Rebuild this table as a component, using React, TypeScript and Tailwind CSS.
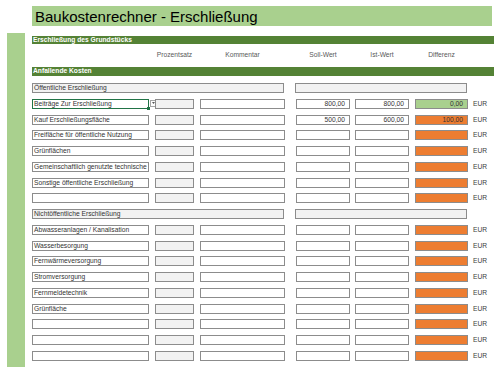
type Row =
  | { kind: 'group'; label: string }
  | { kind: 'item'; label: string; selected?: boolean; soll?: string; ist?: string; diff?: string; ok?: boolean };

const ROWS: Row[] = [
  { kind: 'group', label: 'Öffentliche Erschließung' },
  { kind: 'item', label: 'Beiträge Zur Erschließung', selected: true, soll: '800,00', ist: '800,00', diff: '0,00', ok: true },
  { kind: 'item', label: 'Kauf Erschließungsfläche', soll: '500,00', ist: '600,00', diff: '100,00' },
  { kind: 'item', label: 'Freifläche für öffentliche Nutzung' },
  { kind: 'item', label: 'Grünflächen' },
  { kind: 'item', label: 'Gemeinschaftlich genutzte technische' },
  { kind: 'item', label: 'Sonstige öffentliche Erschließung' },
  { kind: 'item', label: '' },
  { kind: 'group', label: 'Nichtöffentliche Erschließung' },
  { kind: 'item', label: 'Abwasseranlagen / Kanalisation' },
  { kind: 'item', label: 'Wasserbesorgung' },
  { kind: 'item', label: 'Fernwärmeversorgung' },
  { kind: 'item', label: 'Stromversorgung' },
  { kind: 'item', label: 'Fernmeldetechnik' },
  { kind: 'item', label: 'Grünfläche' },
  { kind: 'item', label: '' },
  { kind: 'item', label: '' },
  { kind: 'item', label: '' },
];

const cell = 'h-[10px] shrink-0 border border-[#8c8c8c] overflow-hidden whitespace-nowrap leading-[8px]';

function ItemRow({ row }: { row: Extract<Row, { kind: 'item' }> }) {
  return (
    <div className="flex h-[15.76px] items-start">
      <div
        className={
          row.selected
            ? 'relative h-[10px] w-[117px] shrink-0 border border-[#217346] pl-[1px] leading-[8px] whitespace-nowrap'
            : `${cell} w-[117px] pl-[1px]`
        }
      >
        {row.label}
        {row.selected ? (
          <span className="absolute -bottom-[2px] -right-[2px] h-[3px] w-[3px] bg-[#217346]" />
        ) : null}
      </div>
      {row.selected ? (
        <div className="ml-[1px] mt-[1px] flex h-[7px] w-[7px] shrink-0 items-center justify-center border border-[#a6a6a6] bg-white">
          <svg width="3" height="2" viewBox="0 0 3 2">
            <path d="M0 0h3L1.5 2z" fill="#595959" />
          </svg>
        </div>
      ) : (
        <div className="w-[8px] shrink-0" />
      )}
      <div className={`${cell} ml-[-2px] w-[39px] bg-[#f2f2f2]`} />
      <div className={`${cell} ml-[6px] w-[85px]`} />
      <div className={`${cell} ml-[11px] w-[54px] pr-[4px] text-right`}>{row.soll}</div>
      <div className={`${cell} ml-[5px] w-[54px] pr-[4px] text-right`}>{row.ist}</div>
      <div
        className={`${cell} ml-[6px] w-[53px] pr-[4px] text-right ${row.ok ? 'bg-[#a9d08e]' : 'bg-[#ed7d31]'} border-[#6b6b6b]`}
      >
        {row.diff}
      </div>
      <div className="ml-[5px] leading-[10px] text-[#404040]">EUR</div>
    </div>
  );
}

function GroupRow({ label }: { label: string }) {
  return (
    <div className="flex h-[15.76px] items-start">
      <div className={`${cell} w-[252px] bg-[#f2f2f2] pl-[1px]`}>{label}</div>
      <div className={`${cell} ml-[11px] w-[172px] bg-[#f2f2f2]`} />
    </div>
  );
}

function DarkBar({ label, h }: { label: string; h: string }) {
  return (
    <div className={`${h} w-[462px] bg-[#548235] pl-[1px] font-bold text-white flex items-center`}>{label}</div>
  );
}

export default function App() {
  return (
    <div
      className="h-[367px] w-[500px] overflow-hidden bg-white text-[6.7px] text-[#333333]"
      style={{ fontFamily: '"Liberation Sans", Arial, sans-serif' }}
    >
      <div className="pl-[32px] pt-[6px]">
        <div className="h-[20px] w-[460px] bg-[#a9d08e] pl-[3px] text-[15px] leading-[21px] text-black">
          Baukostenrechner - Erschließung
        </div>
      </div>
      <div className="mt-[7px] flex h-[334px]">
        <div className="ml-[7px] w-[18px] bg-[#a9d08e]" />
        <div className="ml-[7px] pt-[3px]">
          <DarkBar label="Erschließung des Grundstücks" h="h-[8px]" />
          <div className="flex h-[23px] items-center text-[#595959]">
            <div className="w-[123px]" />
            <div className="w-[39px] text-center">Prozentsatz</div>
            <div className="ml-[6px] w-[85px] text-center">Kommentar</div>
            <div className="ml-[11px] w-[54px] text-center">Soll-Wert</div>
            <div className="ml-[5px] w-[54px] text-center">Ist-Wert</div>
            <div className="ml-[6px] w-[53px] text-center">Differenz</div>
          </div>
          <DarkBar label="Anfallende Kosten" h="h-[9px]" />
          <div className="mt-[7px]">
            {ROWS.map((r, i) =>
              r.kind === 'group' ? <GroupRow key={i} label={r.label} /> : <ItemRow key={i} row={r} />,
            )}
          </div>
        </div>
      </div>
    </div>
  );
}
